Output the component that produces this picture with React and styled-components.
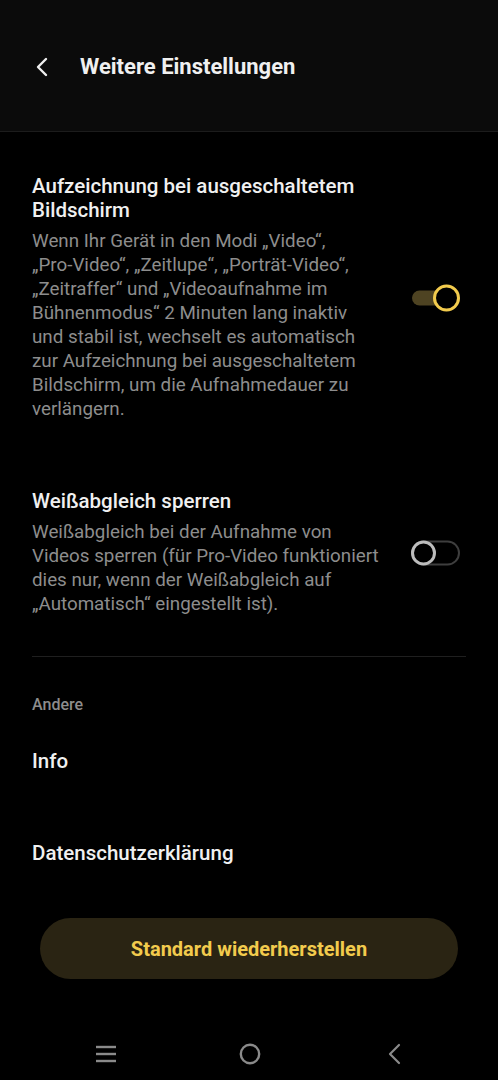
import React, { useState } from 'react';
import styled, { createGlobalStyle } from 'styled-components';

const GlobalStyle = createGlobalStyle`
	html, body {
		margin: 0;
		padding: 0;
		background: #000;
	}
	body {
		font-family: Roboto, 'Noto Sans', 'Liberation Sans', sans-serif;
		-webkit-font-smoothing: antialiased;
	}
	* {
		box-sizing: border-box;
	}
`;

const colors = {
	text: '#f0f0f0',
	sub: '#8d8d8d',
	yellow: '#f2cb4d',
	nav: '#8a8a8a',
};

const Toggle = ({ on, onClick }) => (
	<ToggleWrap onClick={onClick} role="switch" aria-checked={on}>
		<Track on={on} />
		<Knob on={on} />
	</ToggleWrap>
);

const App = () => {
	const [screenOff, setScreenOff] = useState(true);
	const [wbLock, setWbLock] = useState(false);

	return (
		<>
			<GlobalStyle />
			<Screen>
				<Header>
					<BackButton aria-label="Zurück">
						<svg width="14" height="20" viewBox="0 0 14 20">
							<path
								d="M11 2 L3 10 L11 18"
								fill="none"
								stroke="#f0f0f0"
								strokeWidth="2.4"
								strokeLinecap="round"
								strokeLinejoin="round"
							/>
						</svg>
					</BackButton>
					<Title>Weitere Einstellungen</Title>
				</Header>

				<Content>
					<SettingRow first>
						<SettingText>
							<SettingTitle>Aufzeichnung bei ausgeschaltetem Bildschirm</SettingTitle>
							<SettingDesc>
								Wenn Ihr Gerät in den Modi „Video“, <NoWrap>„Pro-Video“,</NoWrap>{' '}
								„Zeitlupe“, <NoWrap>„Porträt-Video“,</NoWrap> „Zeitraffer“ und
								„Videoaufnahme im Bühnenmodus“ 2 Minuten lang inaktiv und stabil
								ist, wechselt es automatisch zur Aufzeichnung bei ausgeschaltetem
								Bildschirm, um die Aufnahmedauer zu verlängern.
							</SettingDesc>
						</SettingText>
						<Toggle on={screenOff} onClick={() => setScreenOff(!screenOff)} />
					</SettingRow>

					<SettingRow>
						<SettingText>
							<SettingTitle>Weißabgleich sperren</SettingTitle>
							<SettingDesc>
								Weißabgleich bei der Aufnahme von Videos sperren (für Pro-Video
								funktioniert dies nur, wenn der Weißabgleich auf „Automatisch“
								eingestellt ist).
							</SettingDesc>
						</SettingText>
						<Toggle on={wbLock} onClick={() => setWbLock(!wbLock)} />
					</SettingRow>

					<Divider />

					<GroupLabel>Andere</GroupLabel>
					<LinkItem>Info</LinkItem>
					<LinkItem>Datenschutzerklärung</LinkItem>

					<ResetButton>Standard wiederherstellen</ResetButton>
				</Content>

				<NavBar>
					<NavIcon>
						<svg width="24" height="20" viewBox="0 0 24 20">
							<g stroke={colors.nav} strokeWidth="2.4">
								<line x1="2" y1="3" x2="22" y2="3" />
								<line x1="2" y1="10" x2="22" y2="10" />
								<line x1="2" y1="17" x2="22" y2="17" />
							</g>
						</svg>
					</NavIcon>
					<NavIcon>
						<svg width="24" height="24" viewBox="0 0 24 24">
							<circle cx="12" cy="12" r="9.2" fill="none" stroke={colors.nav} strokeWidth="2.4" />
						</svg>
					</NavIcon>
					<NavIcon>
						<svg width="16" height="22" viewBox="0 0 16 22">
							<path
								d="M13 2 L4 11 L13 20"
								fill="none"
								stroke={colors.nav}
								strokeWidth="2.2"
								strokeLinecap="round"
								strokeLinejoin="round"
							/>
						</svg>
					</NavIcon>
				</NavBar>
			</Screen>
		</>
	);
};

const Screen = styled.div`
	width: 498px;
	height: 1080px;
	background: #000;
	display: flex;
	flex-direction: column;
	overflow: hidden;
`;

const Header = styled.header`
	height: 132px;
	background: #0b0b0b;
	border-bottom: 1px solid #1c1c1c;
	display: flex;
	align-items: flex-start;
	padding: 53px 0 0 30px;
`;

const BackButton = styled.div`
	width: 50px;
	height: 28px;
	display: flex;
	align-items: center;
	padding-left: 5px;
`;

const Title = styled.h1`
	margin: 0;
	font-size: 22px;
	line-height: 28px;
	font-weight: 700;
	color: ${colors.text};
`;

const Content = styled.main`
	flex: 1;
	display: flex;
	flex-direction: column;
	padding-top: 42px;
`;

const SettingRow = styled.div`
	display: flex;
	align-items: center;
	padding: 0 38px 0 32px;
	margin-top: ${(props) => (props.first ? '0' : '68px')};
`;

const SettingText = styled.div`
	width: 348px;
	flex-shrink: 0;
	margin-right: 30px;
`;

const SettingTitle = styled.div`
	font-size: 20.5px;
	line-height: 24px;
	font-weight: 500;
	color: ${colors.text};
`;

const SettingDesc = styled.div`
	margin-top: 7px;
	font-size: 18.8px;
	line-height: 24px;
	color: ${colors.sub};
`;

const NoWrap = styled.span`
	white-space: nowrap;
`;

const ToggleWrap = styled.div`
	position: relative;
	width: 50px;
	height: 28px;
	flex-shrink: 0;
	cursor: pointer;
`;

const Track = styled.div`
	position: absolute;
	top: 50%;
	transform: translateY(-50%);
	left: ${(props) => (props.on ? '2px' : '1px')};
	width: ${(props) => (props.on ? '40px' : '49px')};
	height: ${(props) => (props.on ? '15px' : '25px')};
	border-radius: 13px;
	background: ${(props) => (props.on ? '#4e4322' : 'transparent')};
	border: ${(props) => (props.on ? 'none' : '2.5px solid #3e3e3e')};
`;

const Knob = styled.div`
	position: absolute;
	top: 50%;
	transform: translateY(-50%);
	left: ${(props) => (props.on ? '23px' : '1px')};
	width: ${(props) => (props.on ? '27px' : '25px')};
	height: ${(props) => (props.on ? '27px' : '25px')};
	border-radius: 50%;
	background: #000;
	border: 3px solid ${(props) => (props.on ? colors.yellow : '#bdbdbd')};
`;

const Divider = styled.div`
	margin: 40px 32px 0;
	height: 1px;
	background: #1f1f1f;
`;

const GroupLabel = styled.div`
	margin-top: 38px;
	padding: 0 32px;
	font-size: 16px;
	line-height: 20px;
	font-weight: 500;
	color: ${colors.sub};
`;

const LinkItem = styled.div`
	padding: 34px 32px;
	font-size: 20.5px;
	line-height: 24px;
	font-weight: 500;
	color: ${colors.text};
`;

const ResetButton = styled.button`
	margin: 19px 40px 0;
	height: 61px;
	border: none;
	border-radius: 31px;
	background: #2a2413;
	color: ${colors.yellow};
	font-family: inherit;
	font-size: 20px;
	font-weight: 700;
	cursor: pointer;
`;

const NavBar = styled.nav`
	height: 68px;
	display: grid;
	grid-template-columns: repeat(3, 144px);
	justify-content: center;
	align-items: center;
	padding-top: 16px;
	margin-left: 2px;
`;

const NavIcon = styled.div`
	display: flex;
	justify-content: center;
	align-items: center;
`;

export default App;
